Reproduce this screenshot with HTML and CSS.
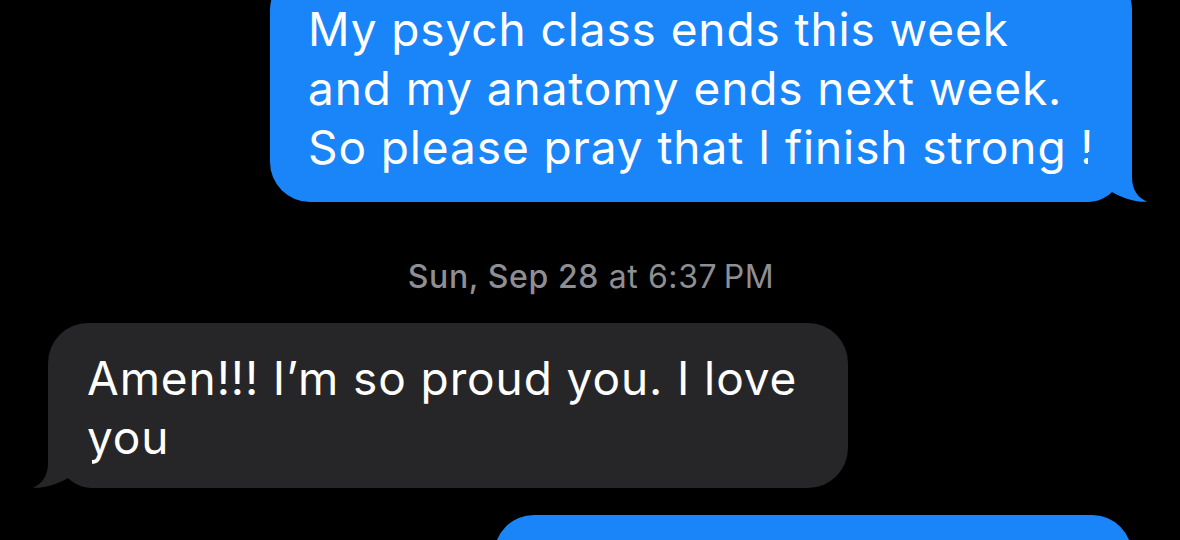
FILE: index.html
```html
<!DOCTYPE html>
<html lang="en">
<head>
<meta charset="utf-8">
<title>Messages</title>
<link rel="stylesheet" href="styles.css">
</head>
<body>
<main class="thread">
  <div class="bubble sent first">
    <p class="text">My psych class ends this week and my anatomy ends next week. So please pray that I finish strong !</p>
    <svg class="tail tail-sent" viewBox="0 0 60 50" width="60" height="50" aria-hidden="true">
      <rect width="60" height="50" fill="#000"/>
      <path d="M0 0H44V25C44 38 50 46 59 49.6C52 50.6 38 48 24 40C18 46 9 50 0 50Z" fill="#1a85f9"/>
    </svg>
  </div>

  <div class="timestamp"><span class="day">Sun, Sep 28</span> at 6:37&#8201;PM</div>

  <div class="bubble received">
    <p class="text">Amen!!! I’m so proud you. I love you</p>
    <svg class="tail tail-received" viewBox="0 0 60 50" width="60" height="50" aria-hidden="true">
      <rect width="60" height="50" fill="#000"/>
      <path d="M0 0H44V25C44 38 50 46 59 49.6C52 50.6 38 48 24 40C18 46 9 50 0 50Z" fill="#262628"/>
    </svg>
  </div>

  <div class="bubble sent next"></div>
</main>
</body>
</html>
```

FILE: styles.css
```css
* { box-sizing: border-box; }

html, body {
  margin: 0;
  padding: 0;
  background: #000;
}

body {
  width: 1180px;
  height: 540px;
  overflow: hidden;
  font-family: Inter, "Liberation Sans", Arial, sans-serif;
  color: #fff;
}

.thread {
  display: flex;
  flex-direction: column;
  padding: 0 48px;
}

.bubble {
  position: relative;
  border-radius: 40px;
}

.text {
  margin: 0;
  font-size: 46px;
  line-height: 59px;
  letter-spacing: 0.9px;
}

.sent {
  align-self: flex-end;
  background: #1a85f9;
}

.first {
  width: 862px;
  margin-top: -30px;
  padding: 30px 30px 25px 38px;
  border-bottom-right-radius: 0;
}

.received {
  align-self: flex-start;
  width: 800px;
  margin-top: 29px;
  padding: 26px 40px 21px 39px;
  background: #262628;
  border-bottom-left-radius: 0;
}

.tail {
  position: absolute;
  bottom: 0;
  display: block;
}

.tail-sent {
  right: -16px;
}

.tail-received {
  left: -16px;
  transform: scaleX(-1);
}

.timestamp {
  align-self: center;
  margin-top: 58px;
  margin-left: 2px;
  font-size: 32px;
  line-height: 34px;
  color: #8e8e93;
  letter-spacing: 0.6px;
}

.timestamp .day {
  font-weight: 500;
}

.next {
  width: 638px;
  height: 80px;
  margin-top: 27px;
}
```
